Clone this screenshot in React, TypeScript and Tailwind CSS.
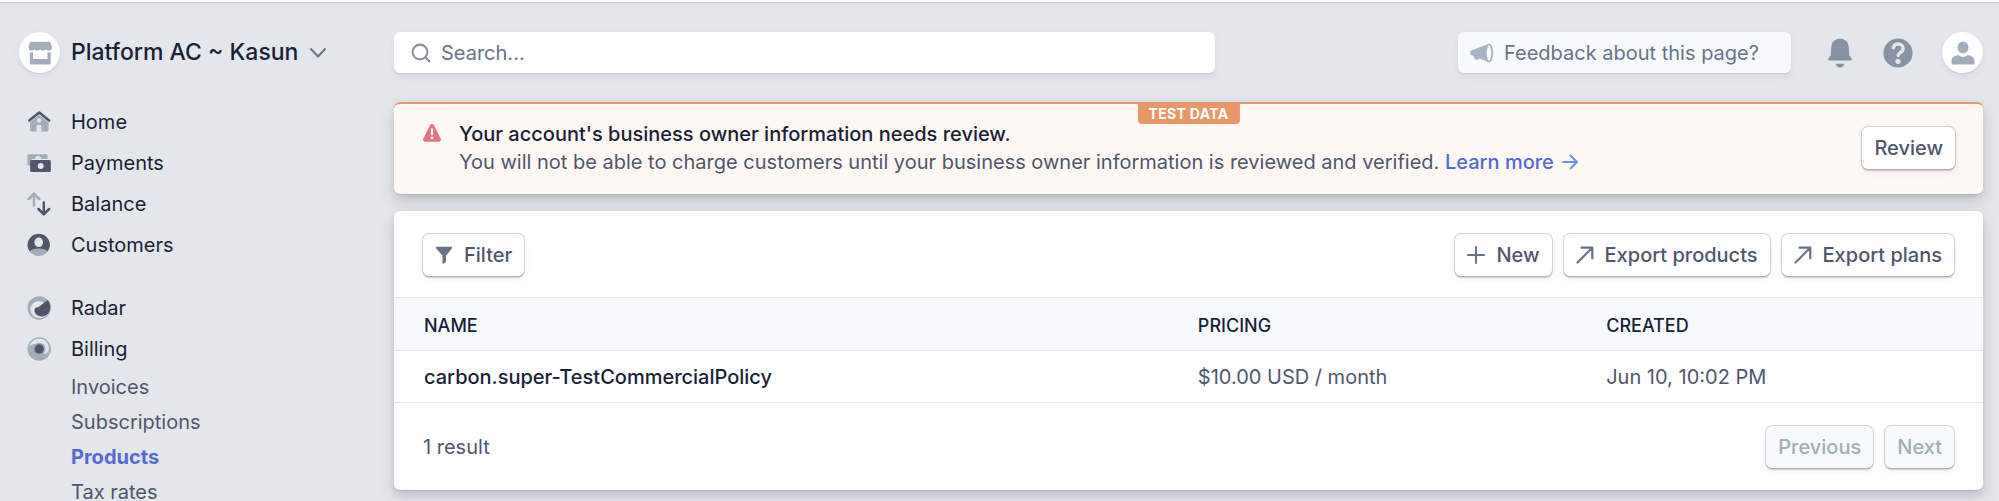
import type { ReactNode } from "react";

const DARK = "#4f566b";
const LIGHT = "#a3acb9";

function HomeIcon() {
  return (
    <svg viewBox="0 0 24 24" className="size-6">
      <path d="M12 5 3 12.500V20a1.500 1.500 0 0 0 1.500 1.500H9.500V16a1 1 0 0 1 1-1h3a1 1 0 0 1 1 1v5.500H20a1.500 1.500 0 0 0 1.500-1.500v-7.500Z" fill={LIGHT} />
      <circle cx="12.200" cy="10.500" r="2.200" fill="#e3e6eb" />
      <path d="M2.300 10.500 12.200 2.600l9.900 7.900" fill="none" stroke={DARK} strokeWidth="2.600" strokeLinecap="round" strokeLinejoin="round" />
    </svg>
  );
}

function PaymentsIcon() {
  return (
    <svg viewBox="0 0 24 24" className="size-6">
      <path d="M1.800 3.200h17.400A1.300 1.300 0 0 1 20.500 4.500V8H14a3 3 0 0 0-6 0H5.500A1.500 1.500 0 0 0 4 9.500v5H1.800A1.300 1.300 0 0 1 .5 13.200V4.500a1.300 1.300 0 0 1 1.300-1.300Z" fill={LIGHT} />
      <path fillRule="evenodd" d="M4.500 9h18A1.300 1.300 0 0 1 23.800 10.300v9.400a1.300 1.300 0 0 1-1.300 1.300h-18a1.300 1.300 0 0 1-1.300-1.300v-9.400A1.300 1.300 0 0 1 4.500 9Zm9.200 3a3 3 0 1 0 0 6 3 3 0 0 0 0-6Z" fill={DARK} />
    </svg>
  );
}

function BalanceIcon() {
  return (
    <svg viewBox="0 0 24 24" className="size-6" fill="none" strokeWidth="2.500" strokeLinecap="round" strokeLinejoin="round">
      <path d="M7 13.500V2M1.700 7 7 1.700 12.300 7" stroke={LIGHT} />
      <path d="M16.800 10.500V22M11.500 17l5.300 5.300L22.100 17" stroke={DARK} />
    </svg>
  );
}

function CustomersIcon() {
  return (
    <svg viewBox="0 0 24 24" className="size-6">
      <path d="M11.700.7a11.200 11.200 0 0 0-9.200 17.500h18.400A11.200 11.200 0 0 0 11.700.7Z" fill={DARK} />
      <path d="M2.500 18.200c2-1.900 5.500-2.700 9.200-2.700s7.200.8 9.200 2.700a11.200 11.200 0 0 1-18.400 0Z" fill={LIGHT} />
      <ellipse cx="11.700" cy="9.300" rx="4.300" ry="4.800" fill="#e3e6eb" />
    </svg>
  );
}

function RadarIcon() {
  return (
    <svg viewBox="0 0 24 24" className="size-6">
      <circle cx="12.200" cy="12" r="11.700" fill={LIGHT} />
      <path d="M17 6.800C14 4.800 9.500 4.600 6.500 7 2 10.700 2.500 17.500 7.500 20.700c4.500 2.600 10.800 1.200 14-3.700L12 12Z" fill="#e3e6eb" />
      <path d="M20.800 4c2.600 2.800 3.300 7.700 1.600 11.400-1.700 3.600-5.400 5.400-9 4.900-4-.6-6.400-3.800-5.800-6.800.3-1.800 2.100-2.700 3.700-2.200Z" fill={DARK} />
    </svg>
  );
}

function BillingIcon() {
  return (
    <svg viewBox="0 0 24 24" className="size-6">
      <circle cx="12.200" cy="12" r="11.700" fill={LIGHT} />
      <path d="M2.300 9.800C3.400 5 7.500 1.800 12.300 1.800c5.700 0 10 4.600 9.700 9.900-.2 3.200-2.400 5.400-5 5.200L12 12 8 7c-2.300.2-4.300 1.200-5.700 2.800Z" fill="#e3e6eb" />
      <circle cx="12.200" cy="12" r="6.300" fill={LIGHT} />
      <circle cx="12.200" cy="12" r="4.700" fill={DARK} />
    </svg>
  );
}

function StoreIcon() {
  return (
    <svg viewBox="0 0 24 24" className="size-6" fill={LIGHT}>
      <path d="M3.500.8h17.300c.8 0 1.400.5 1.700 1.200l1.200 3.200c.8 2.300-.7 4.400-2.800 4.400-1.300 0-2.200-.6-2.900-1.400-.7.800-1.700 1.400-2.900 1.400s-2.200-.6-2.900-1.400c-.7.800-1.700 1.400-2.900 1.400s-2.200-.6-2.900-1.400c-.7.800-1.700 1.400-2.900 1.400C1.400 9.600 0 7.500.6 5.200L1.800 2C2.100 1.300 2.700.8 3.500.8Z" />
      <path d="M1.800 11.200c1.200.4 2.200.3 3.200-.1v7h14.500v-7c1 .4 2.100.5 3.200.1v10.900c0 .9-.6 1.500-1.500 1.500H3.300c-.9 0-1.500-.6-1.500-1.500Z" />
    </svg>
  );
}

function BellIcon() {
  return (
    <svg viewBox="0 0 24 30" className="h-[30px] w-6" fill="#8792a2">
      <path d="M12 .4c5 0 8.400 3.600 8.700 8.300l.5 8.300c.1 1.600 2.600 2.600 2.600 4.200 0 .8-.5 1.300-1.300 1.300h-21c-.8 0-1.300-.5-1.300-1.300 0-1.600 2.500-2.600 2.600-4.200l.5-8.300C3.600 4 7 .4 12 .4Z" />
      <path d="M7.600 25.800h8.800c-.4 2.200-2.200 3.700-4.400 3.700s-4-1.500-4.400-3.700Z" />
    </svg>
  );
}

function HelpIcon() {
  return (
    <svg viewBox="0 0 30 30" className="size-[30px]">
      <circle cx="15" cy="15" r="14.600" fill="#8792a2" />
      <path d="M10.300 9.800C10.900 7.300 12.700 6 15.200 6c2.900 0 5 1.800 5 4.300 0 2-1.100 3.200-2.800 4.200-1.600.9-2.200 1.600-2.200 3" fill="none" stroke="#e3e6eb" strokeWidth="3.400" strokeLinecap="round" />
      <circle cx="15" cy="23.300" r="2.600" fill="#e3e6eb" />
    </svg>
  );
}

function UserIcon() {
  return (
    <svg viewBox="0 0 24 24" className="size-6" fill={LIGHT}>
      <ellipse cx="12" cy="6.500" rx="5.500" ry="6" />
      <path d="M.5 20.500c0-4 3-6 7-6.500 1.200 1.200 2.800 1.900 4.500 1.900s3.300-.7 4.500-1.900c4 .5 7 2.500 7 6.500v1.600c0 .8-.5 1.300-1.300 1.300H1.800c-.8 0-1.300-.5-1.300-1.300Z" />
    </svg>
  );
}

function MegaphoneIcon() {
  return (
    <svg viewBox="0 0 24 20" className="h-5 w-6">
      <path d="M18.500 1 1.800 7.200C.7 7.700 0 8.500 0 9.700s.6 2.200 1.700 2.600l2 .6c.1 2.300 1.200 3.800 3 3.800 1 0 1.900-.4 2.400-1.300L18.500 19Z" fill="#a9b4c2" />
      <ellipse cx="19" cy="10" rx="3.200" ry="8.600" fill="#f6fafd" stroke="#a9b4c2" strokeWidth="1.800" />
    </svg>
  );
}

function SearchIcon() {
  return (
    <svg viewBox="0 0 20 20" className="size-5" fill="none" stroke="#8792a2" strokeWidth="2.100" strokeLinecap="round">
      <circle cx="9" cy="9" r="7.400" />
      <path d="m14.300 14.300 4 4" />
    </svg>
  );
}

function WarningIcon() {
  return (
    <svg viewBox="0 0 18 18" className="size-[18px]">
      <path d="M7 1.300c.9-1.600 3.100-1.600 4 0l6.500 13.300c.8 1.500-.2 3.100-1.800 3.100H2.300c-1.600 0-2.600-1.600-1.800-3.100Z" fill="#e56f7c" />
      <path d="M9 5.200v5.200" stroke="#fef8f4" strokeWidth="2.200" strokeLinecap="round" />
      <circle cx="9" cy="13.900" r="1.400" fill="#fef8f4" />
    </svg>
  );
}

function FilterIcon() {
  return (
    <svg viewBox="0 0 18 18" className="size-[18px]" fill="#697386">
      <path d="M1.700.7h14.600c.8 0 1.200.9.700 1.500L11 9.700v5.600c0 .4-.2.700-.5.900l-2.200 1.500c-.4.300-.8 0-.8-.4V9.700L1 2.200C.5 1.600.9.700 1.700.7Z" />
    </svg>
  );
}

function PlusIcon() {
  return (
    <svg viewBox="0 0 18 18" className="size-[18px]" fill="none" stroke="#697386" strokeWidth="2" strokeLinecap="round">
      <path d="M9 1v16M1 9h16" />
    </svg>
  );
}

function ExportIcon() {
  return (
    <svg viewBox="0 0 18 18" className="size-[18px]" fill="none" stroke="#697386" strokeWidth="2.200" strokeLinecap="round" strokeLinejoin="round">
      <path d="M1.500 16.500 16 2M5.500 1.700h10.800v10.600" />
    </svg>
  );
}

function ArrowIcon() {
  return (
    <svg viewBox="0 0 16 16" className="size-4" fill="none" stroke="#6c8eef" strokeWidth="1.900" strokeLinecap="round" strokeLinejoin="round">
      <path d="M1 8h13.500M8.500 1.500 15 8l-6.500 6.500" />
    </svg>
  );
}

function ChevronIcon() {
  return (
    <svg viewBox="0 0 18 12" className="h-3 w-[18px]" fill="none" stroke="#697386" strokeWidth="2" strokeLinecap="round" strokeLinejoin="round">
      <path d="m2 2 7 7.500L16 2" />
    </svg>
  );
}

function NavItem({ icon, label }: { icon: ReactNode; label: string }) {
  return (
    <li>
      <a href="#" className="flex h-[41px] items-center gap-5 pl-[27px] text-[#1a1f36]">
        {icon}
        {label}
      </a>
    </li>
  );
}

function SubItem({ label, active = false }: { label: string; active?: boolean }) {
  return (
    <li>
      <a
        href="#"
        className={
          active
            ? "flex h-[35px] items-center pl-[71px] leading-none font-bold text-[#5469d4]"
            : "flex h-[35px] items-center pl-[71px] leading-none text-[#4f566b]"
        }
      >
        {label}
      </a>
    </li>
  );
}

function Button({ icon, children, disabled = false }: { icon?: ReactNode; children: ReactNode; disabled?: boolean }) {
  return (
    <button
      type="button"
      disabled={disabled}
      className="flex h-[42px] shrink-0 items-center gap-[11px] rounded-md bg-white px-3 font-medium whitespace-nowrap text-[#4f566b] shadow-[0_0_0_1px_rgba(60,66,87,0.2),0_2px_1px_rgba(0,0,0,0.14),0_3px_7px_rgba(60,66,87,0.1)] disabled:bg-[#f6fafd] disabled:text-[#a3acb9]"
    >
      {icon}
      {children}
    </button>
  );
}

const cardShadow =
  "shadow-[0_1px_1px_rgba(0,0,0,0.1),0_9px_18px_rgba(60,66,87,0.12),0_4px_8px_rgba(0,0,0,0.1)]";
const fieldShadow = "shadow-[0_1px_1px_rgba(0,0,0,0.08),0_3px_7px_rgba(60,66,87,0.08)]";

export default function App() {
  return (
    <div className="flex h-screen flex-col overflow-hidden border-t-2 border-white bg-[#e3e6eb] font-['Inter','Liberation_Sans',sans-serif] text-xl text-[#4f566b]">
      <div className="flex min-h-0 flex-1 border-t border-[#cbcdd2]">
        <aside className="w-[394px] shrink-0 pt-[29px]">
          <button type="button" className="flex h-[41px] items-center gap-[11px] pl-[19px] text-[23px] font-medium text-[#1a1f36]">
            <span className={`flex size-[41px] items-center justify-center rounded-full bg-white ${fieldShadow}`}>
              <StoreIcon />
            </span>
            Platform AC ~ Kasun
            <ChevronIcon />
          </button>
          <nav className="pt-7">
            <ul>
              <NavItem icon={<HomeIcon />} label="Home" />
              <NavItem icon={<PaymentsIcon />} label="Payments" />
              <NavItem icon={<BalanceIcon />} label="Balance" />
              <NavItem icon={<CustomersIcon />} label="Customers" />
            </ul>
            <ul className="pt-[22px]">
              <NavItem icon={<RadarIcon />} label="Radar" />
              <NavItem icon={<BillingIcon />} label="Billing" />
              <SubItem label="Invoices" />
              <SubItem label="Subscriptions" />
              <SubItem label="Products" active />
              <SubItem label="Tax rates" />
            </ul>
          </nav>
        </aside>

        <main className="min-w-0 flex-1 pt-[29px] pr-4">
          <header className="flex items-center justify-between">
            <label className={`flex h-[41px] w-[821px] items-center gap-[10px] rounded-md bg-white px-[17px] ${fieldShadow}`}>
              <SearchIcon />
              <input
                type="search"
                aria-label="Search"
                placeholder="Search..."
                className="min-w-0 flex-1 bg-transparent outline-none placeholder:text-[#697386]"
              />
            </label>
            <div className="flex items-center">
              <button
                type="button"
                className={`flex h-[41px] w-[333px] items-center gap-[10px] rounded-md bg-[#f6fafd] px-3 text-[#697386] ${fieldShadow}`}
              >
                <MegaphoneIcon />
                Feedback about this page?
              </button>
              <button type="button" aria-label="Notifications" className="ml-[37px]">
                <BellIcon />
              </button>
              <button type="button" aria-label="Help" className="ml-[31px]">
                <HelpIcon />
              </button>
              <button
                type="button"
                aria-label="Account"
                className={`ml-[29px] flex size-[41px] items-center justify-center rounded-full bg-white ${fieldShadow}`}
              >
                <UserIcon />
              </button>
            </div>
          </header>

          <section className={`relative mt-[29px] flex h-[92px] items-center justify-between rounded-md border-t-2 border-[#e8976a] bg-[#fef8f4] px-7 pb-[2px] ${cardShadow}`}>
            <span className="absolute top-0 left-1/2 flex h-5 -translate-x-1/2 items-center rounded-b bg-[#e99767] px-[11px] text-sm font-bold tracking-wide whitespace-nowrap text-white">
              TEST DATA
            </span>
            <div className="flex items-start gap-[18px] leading-7">
              <span className="pt-1 pl-[1px]">
                <WarningIcon />
              </span>
              <div>
                <p className="font-medium text-[#1a1f36]">Your account's business owner information needs review.</p>
                <p>
                  You will not be able to charge customers until your business owner information is reviewed and verified.{" "}
                  <a href="#" className="inline-flex items-center gap-2 font-medium text-[#5469d4]">
                    Learn more
                    <ArrowIcon />
                  </a>
                </p>
              </div>
            </div>
            <Button>Review</Button>
          </section>

          <section className={`mt-[17px] rounded-md bg-white ${cardShadow}`}>
            <div className="flex items-center justify-between px-[29px] pt-[23px] pb-[21px]">
              <Button icon={<FilterIcon />}>Filter</Button>
              <div className="flex gap-3">
                <Button icon={<PlusIcon />}>New</Button>
                <Button icon={<ExportIcon />}>Export products</Button>
                <Button icon={<ExportIcon />}>Export plans</Button>
              </div>
            </div>
            <table className="w-full table-fixed text-left">
              <colgroup>
                <col className="w-[48.7%]" />
                <col className="w-[25.7%]" />
                <col />
              </colgroup>
              <thead>
                <tr className="h-[53px] border-y border-[#e3e8ee] bg-[#f6fafd] text-lg text-[#1a1f36]">
                  <th className="pt-[3px] pl-[30px] font-medium">NAME</th>
                  <th className="pt-[3px] pl-[30px] font-medium">PRICING</th>
                  <th className="pt-[3px] pl-[30px] font-medium">CREATED</th>
                </tr>
              </thead>
              <tbody>
                <tr className="h-[52px] border-b border-[#e3e8ee]">
                  <td className="pl-[30px] font-medium text-[#1a1f36]">carbon.super-TestCommercialPolicy</td>
                  <td className="pl-[30px]">$10.00 USD / month</td>
                  <td className="pl-[30px]">Jun 10, 10:02 PM</td>
                </tr>
              </tbody>
            </table>
            <div className="flex items-center justify-between px-[29px] pt-[23px] pb-[22px]">
              <span>1 result</span>
              <div className="flex gap-3">
                <Button disabled>Previous</Button>
                <Button disabled>Next</Button>
              </div>
            </div>
          </section>
        </main>
      </div>
    </div>
  );
}
